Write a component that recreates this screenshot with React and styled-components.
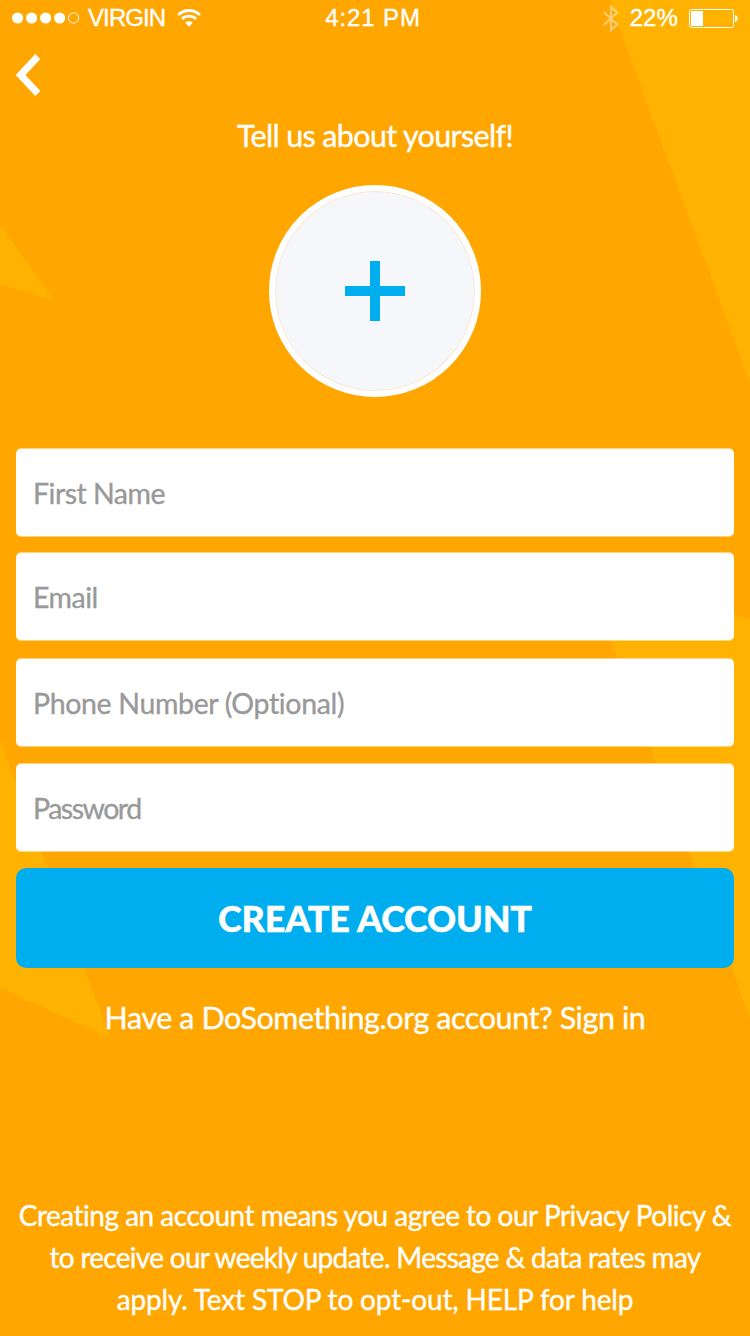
import React from "react";
import styled, { createGlobalStyle } from "styled-components";

const Global = createGlobalStyle`
  *, *::before, *::after { box-sizing: border-box; }
  body { margin: 0; background: #ffa600; }
`;

const Screen = styled.main`
  position: relative;
  width: 750px;
  height: 1336px;
  overflow: hidden;
  display: flex;
  flex-direction: column;
  background: #ffa600;
  color: #fff;
  font-family: Lato, "Open Sans", sans-serif;
  font-variant-ligatures: none;
  -webkit-text-stroke: 0.35px currentColor;
  isolation: isolate;
`;

const Backdrop = styled.svg`
  position: absolute;
  inset: 0;
  z-index: -1;
`;

const StatusBar = styled.header`
  display: grid;
  grid-template-columns: 1fr auto 1fr;
  align-items: center;
  height: 36px;
  padding: 0 12px;
  font: 24px/36px "Liberation Sans", Arial, sans-serif;
`;

const StatusGroup = styled.div`
  display: flex;
  align-items: center;
  justify-content: ${(p) => (p.$end ? "flex-end" : "flex-start")};
  gap: ${(p) => p.$gap}px;
`;

const StatusText = styled.span`
  letter-spacing: ${(p) => p.$track || 0}px;
  white-space: nowrap;
`;

const Carrier = styled(StatusText)`
  margin-right: 4px;
`;

const Clock = styled(StatusText)`
  padding-right: 4px;
`;

const NavBar = styled.nav`
  display: flex;
  height: 78px;
  padding: 17px 15px 0;
`;

const BackButton = styled.button`
  display: flex;
  align-items: flex-start;
  padding: 0;
  border: 0;
  background: none;
  color: inherit;
`;

const Title = styled.h1`
  margin: 0;
  height: 44px;
  text-align: center;
  font-size: 30.5px;
  font-weight: 400;
  line-height: 42px;
  letter-spacing: ${(p) => p.$track}px;
`;

const Avatar = styled.button`
  display: flex;
  align-items: center;
  justify-content: center;
  align-self: center;
  width: 212px;
  height: 212px;
  margin-top: 27px;
  padding: 0;
  border: 6px solid #fff;
  border-radius: 50%;
  background: #f5f7fa;
  box-shadow: inset 0 0 0 1px #f9e8cc;
`;

const Form = styled.form`
  display: flex;
  flex-direction: column;
  margin: 51px 16px 0;
`;

const Field = styled.input`
  height: 89px;
  margin: 0 0 ${(p) => p.$after}px;
  padding: 1px 17px 0;
  border: 0 solid rgba(255, 255, 255, 0.5);
  border-width: 1px 0;
  border-radius: 5px;
  background: #fff;
  background-clip: padding-box;
  font: 28.5px Lato, "Open Sans", sans-serif;
  font-variant-ligatures: none;
  letter-spacing: ${(p) => p.$track}px;
  outline: 0;
  &::placeholder { color: #999; opacity: 1; }
`;

const Submit = styled.button`
  height: 100px;
  padding: 0;
  border: 0;
  border-radius: 10px;
  background: #00aeef;
  color: #fff;
  font: 900 36px Lato, "Open Sans", sans-serif;
  letter-spacing: ${(p) => p.$track}px;
`;

const SignIn = styled.p`
  margin: 28px 0 0;
  text-align: center;
  font-size: 30.5px;
  line-height: 42px;
  letter-spacing: ${(p) => p.$track}px;
`;

const Legal = styled.footer`
  display: flex;
  flex-direction: column;
  margin-top: auto;
  padding-bottom: 16px;
  text-align: center;
  font-size: 28px;
  line-height: 42px;
`;

const LegalLine = styled.span`
  white-space: nowrap;
  letter-spacing: ${(p) => p.$track}px;
`;

const fields = [
  { label: "First Name", type: "text", after: 15, track: -0.5 },
  { label: "Email", type: "email", after: 17, track: -0.5 },
  { label: "Phone Number (Optional)", type: "tel", after: 16, track: -0.35 },
  { label: "Password", type: "password", after: 16, track: -1.5 },
];

const SignalDots = () => (
  <svg width="68" height="12" viewBox="0 0 68 12" fill="#fff">
    {[5.6, 19.6, 33.6, 47.6].map((x) => (
      <circle key={x} cx={x} cy="6" r="5.6" />
    ))}
    <circle cx="61.6" cy="6" r="5.1" fill="none" stroke="#fff" />
  </svg>
);

const Wifi = () => (
  <svg width="24" height="18" viewBox="0 0 24 18" fill="none" stroke="#fff" strokeWidth="2.8">
    <path d="M1.200 5.900a15.400 15.400 0 0 1 21.600 0" />
    <path d="M4.900 10a10.200 10.200 0 0 1 14.200 0" />
    <path d="M12 18 8.200 13.800a5.600 5.600 0 0 1 7.600 0Z" fill="#fff" stroke="none" />
  </svg>
);

const Bluetooth = () => (
  <svg width="16" height="27" viewBox="0 0 16 27" fill="none" stroke="#fff" strokeOpacity=".45" strokeWidth="2.2">
    <path d="M.8 7 14.200 19.500 8 25V2l6.200 5.500L.8 20" />
  </svg>
);

const Battery = () => (
  <svg width="49" height="19" viewBox="0 0 49 19">
    <rect x=".5" y=".5" width="44" height="18" rx="2" fill="none" stroke="#fff" />
    <rect x="2" y="2" width="12" height="15" fill="#fff" />
    <path d="M46 6c1.600.3 2.600 1.500 2.600 3.500S47.600 12.700 46 13Z" fill="#fff" />
  </svg>
);

export default function App() {
  return (
    <Screen>
      <Global />
      <Backdrop width="750" height="1336" fill="#ffb300">
        <path d="M609 0H750V383Z" />
        <path d="M0 225 55 301 0 284Z" />
        <path d="M0 739 110 1038 0 988Z" />
        <path d="M580 556 750 620V1018Z" />
      </Backdrop>
      <StatusBar>
        <StatusGroup $gap={8}>
          <SignalDots />
          <Carrier $track={-0.9}>VIRGIN</Carrier>
          <Wifi />
        </StatusGroup>
        <Clock $track={0.9}>4:21 PM</Clock>
        <StatusGroup $end $gap={11}>
          <Bluetooth />
          <StatusText $track={0.1}>22%</StatusText>
          <Battery />
        </StatusGroup>
      </StatusBar>
      <NavBar>
        <BackButton aria-label="Back">
          <svg width="26" height="44" viewBox="0 0 26 44" fill="none" stroke="#fff" strokeWidth="7">
            <path d="M22.800 3.500 5.500 22 22.800 40.500" />
          </svg>
        </BackButton>
      </NavBar>
      <Title $track={-0.65}>Tell us about yourself!</Title>
      <Avatar aria-label="Add photo">
        <svg width="60" height="60" viewBox="0 0 60 60" fill="#00aeef">
          <path d="M25 0h10v25h25v10H35v25H25V35H0V25h25z" />
        </svg>
      </Avatar>
      <Form>
        {fields.map((f) => (
          <Field key={f.label} type={f.type} placeholder={f.label} $after={f.after} $track={f.track} />
        ))}
        <Submit type="button" $track={-0.2}>CREATE ACCOUNT</Submit>
      </Form>
      <SignIn $track={-0.43}>Have a DoSomething.org account? Sign in</SignIn>
      <Legal>
        <LegalLine $track={-0.5}>Creating an account means you agree to our Privacy Policy &amp;</LegalLine>
        <LegalLine $track={-0.71}>to receive our weekly update. Message &amp; data rates may</LegalLine>
        <LegalLine $track={-0.16}>apply. Text STOP to opt-out, HELP for help</LegalLine>
      </Legal>
    </Screen>
  );
}
